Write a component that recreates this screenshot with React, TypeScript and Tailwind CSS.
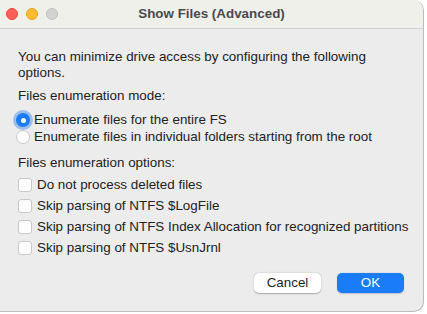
import React from "react";

const Radio = ({ checked, label }: { checked?: boolean; label: string }) => (
  <label className="flex items-center h-[17px] whitespace-nowrap">
    {checked ? (
      <span className="shrink-0 w-[14px] h-[14px] rounded-full bg-[#1a7cf8] flex items-center justify-center shadow-[0_0_0_3px_rgba(92,152,236,0.55)]">
        <span className="w-[5px] h-[5px] rounded-full bg-white" />
      </span>
    ) : (
      <span className="shrink-0 w-[14px] h-[14px] rounded-full bg-white border border-[#c8c8c8]" />
    )}
    <span className="ml-[4px]">{label}</span>
  </label>
);

const Check = ({ label }: { label: string }) => (
  <label className="flex items-center h-[21px] whitespace-nowrap">
    <span className="shrink-0 w-[14px] h-[14px] rounded-[3px] bg-white border border-[#c8c8c8]" />
    <span className="ml-[5px]">{label}</span>
  </label>
);

const App = () => {
  return (
    <div className="w-[427px] h-[314px] bg-white">
      <div
        className="w-[424px] h-[312px] bg-[#ececec] rounded-r-[10px] border-r border-b border-[#bdbdbd] overflow-hidden text-[13.4px] text-[#222]"
        style={{ fontFamily: '"Liberation Sans", Arial, sans-serif' }}
      >
        {/*Title bar*/}
        <div className="h-[29px] bg-[#f0f0eb] border-b border-[#d3d3d0] flex items-center relative">
          <div className="flex gap-[8px] pl-[6px]">
            <span className="w-[12px] h-[12px] rounded-full bg-[#fe5f57] border border-[#e2463f]" />
            <span className="w-[12px] h-[12px] rounded-full bg-[#febc2e] border border-[#e1a116]" />
            <span className="w-[12px] h-[12px] rounded-full bg-[#d3d3d1] border border-[#c1c1bf]" />
          </div>
          <div className="absolute inset-0 flex items-center justify-center font-bold text-[#4a4a4a]">
            Show Files (Advanced)
          </div>
        </div>
        {/*Body*/}
        <div className="pl-[18px] pr-[18px] pt-[20px]">
          <p className="leading-[16px]">
            You can minimize drive access by configuring the following options.
          </p>
          <p className="mt-[7px] leading-[16px]">Files enumeration mode:</p>
          <div className="mt-[7.5px] -ml-[2px]">
            <Radio checked label="Enumerate files for the entire FS" />
            <Radio label="Enumerate files in individual folders starting from the root" />
          </div>
          <p className="mt-[9.5px] leading-[16px]">Files enumeration options:</p>
          <div className="mt-[3.5px]">
            <Check label="Do not process deleted files" />
            <Check label="Skip parsing of NTFS $LogFile" />
            <Check label="Skip parsing of NTFS Index Allocation for recognized partitions" />
            <Check label="Skip parsing of NTFS $UsnJrnl" />
          </div>
          <div className="flex justify-end gap-[16px] mt-[14.5px] pr-[1px]">
            <button className="w-[67px] h-[20px] bg-white rounded-[5px] shadow-[0_0.5px_1.5px_rgba(0,0,0,0.3)] text-[#1e1e1e]">
              Cancel
            </button>
            <button className="w-[67px] h-[20px] bg-[#1a7cf8] rounded-[5px] text-white shadow-[0_0.5px_1.5px_rgba(0,0,0,0.2)]">
              OK
            </button>
          </div>
        </div>
      </div>
    </div>
  );
};

export default App;
